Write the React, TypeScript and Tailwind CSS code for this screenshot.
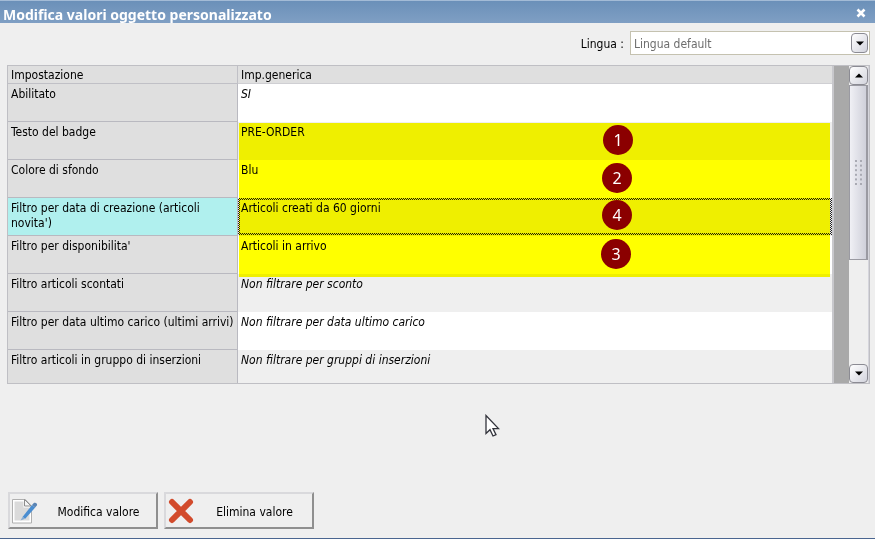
import { useState } from 'react';

interface Setting {
    label: string;
    value: string;
    isDefault?: boolean;
}

const settings: Setting[] = [
    { label: 'Abilitato', value: 'SI', isDefault: true },
    { label: 'Testo del badge', value: 'PRE-ORDER' },
    { label: 'Colore di sfondo', value: 'Blu' },
    { label: "Filtro per data di creazione (articoli novita')", value: 'Articoli creati da 60 giorni' },
    { label: "Filtro per disponibilita'", value: 'Articoli in arrivo' },
    { label: 'Filtro articoli scontati', value: 'Non filtrare per sconto', isDefault: true },
    { label: 'Filtro per data ultimo carico (ultimi arrivi)', value: 'Non filtrare per data ultimo carico', isDefault: true },
    { label: 'Filtro articoli in gruppo di inserzioni', value: 'Non filtrare per gruppi di inserzioni', isDefault: true },
];

// Step markers pinned over the highlighted rows
const markers = [
    { step: 1, position: 'left-[595px] top-[59px]' },
    { step: 2, position: 'left-[594px] top-[97px]' },
    { step: 4, position: 'left-[594px] top-[134px]' },
    { step: 3, position: 'left-[593px] top-[173px]' },
];

const knob = 'flex items-center justify-center rounded-sm border border-[#8b8b93] bg-linear-to-br from-white to-[#d3d4dd]';

const actionButton = 'flex h-[37px] w-[150px] items-center border-2 border-b-[#8f8f8f] border-l-[#d9d9dc] border-r-[#8f8f8f] border-t-[#d9d9dc] pl-px';

function Arrow({ up = false }: { up?: boolean }) {
    return (
        <svg width="8" height="5" viewBox="0 0 8 5" aria-hidden="true">
            <path d={up ? 'M0 4.5 4 .5 8 4.5Z' : 'M0 .5 4 4.5 8 .5Z'} fill="#000" />
        </svg>
    );
}

function EditIcon() {
    return (
        <svg width="28" height="28" viewBox="0 0 28 28" fill="none" aria-hidden="true">
            <path d="M1.5 2.500h13l6 6.500v17h-19Z" fill="#fff" stroke="#b0b0b0" />
            <path d="M3.500 4.500h9v6h6v13h-15Z" fill="#dadada" />
            <path d="M13.500 2.500v6.500h6.500Z" fill="#f5f5f5" stroke="#8d8d8d" />
            <path d="m11.500 20 9.500-12 3.200 2.500-10 11.200Z" fill="#4a8dd0" />
            <path d="m21 8 1.800-2c1.200-1 4.200.6 3 2.600L24.200 10.500Z" fill="#5a84b4" />
            <path d="m11.500 20 2.700 1.700-4.700 1.800Z" fill="#86abd2" />
        </svg>
    );
}

function DeleteIcon() {
    return (
        <svg width="28" height="28" viewBox="0 0 28 28" fill="none" aria-hidden="true">
            <path d="m5 5 18 18M23 5 5 23" stroke="#d24b2c" strokeWidth="6" strokeLinecap="round" />
        </svg>
    );
}

function Cursor() {
    return (
        <svg className="absolute left-[485px] top-[414px]" width="15" height="24" viewBox="0 0 15 24" aria-hidden="true">
            <path d="M1 1.500v18l4-3.800 3 6.300 3-1.400-3-6h5.500Z" fill="#fff" stroke="#33343c" strokeWidth="1.300" />
        </svg>
    );
}

function ValueCell({ setting, selected }: { setting: Setting; selected: boolean }) {
    if (selected) {
        return (
            <div className="h-[37px] bg-[repeating-conic-gradient(#222_0_25%,#efefef_0_50%)] bg-[length:2px_2px] p-[2px]">
                <div className="h-full bg-[#efefef] px-px pt-px">{setting.value}</div>
            </div>
        );
    }
    return <div className={`px-[3px] pt-[3px] ${setting.isDefault ? 'italic' : ''}`}>{setting.value}</div>;
}

export default function App() {
    const [selected, setSelected] = useState(3);

    return (
        <div className="relative flex min-h-screen flex-col border-b border-[#4a6590] bg-[#efefef] font-['DejaVu_Sans_Condensed','DejaVu_Sans',sans-serif] text-xs leading-[15px] text-black [font-stretch:condensed]">
            <header className="flex h-[23px] items-center justify-between border-t border-[#a3bbd6] bg-linear-to-b from-[#6b90b9] to-[#7f9fc4] pl-[3px] pr-2 pt-[6px]">
                <h1 className="font-['Noto_Sans',sans-serif] text-sm font-bold text-white">Modifica valori oggetto personalizzato</h1>
                <button aria-label="Chiudi" className="mb-1 flex size-3 items-center justify-center">
                    <svg width="10" height="10" viewBox="0 0 10 10" aria-hidden="true">
                        <path d="m1.500 1.500 7 7M8.500 1.500l-7 7" stroke="#fff" strokeWidth="2.600" />
                    </svg>
                </button>
            </header>

            <main className="flex grow flex-col pl-[7px] pr-[5px]">
                <div className="flex items-center justify-end gap-[6px] pb-[10px] pt-2">
                    <label htmlFor="lingua" className="pt-[2px]">Lingua :</label>
                    <div className="relative w-60">
                        <select id="lingua" className="h-6 w-full appearance-none border border-[#c5c2b0] bg-white px-[3px] pt-[2px] text-[#6d6d6d]">
                            <option>Lingua default</option>
                        </select>
                        <span className={`${knob} pointer-events-none absolute right-[2px] top-[2px] h-5 w-[17px]`}>
                            <Arrow />
                        </span>
                    </div>
                </div>

                <div className="flex h-[319px] border border-[#bfbfc4]">
                    <div className="relative min-w-0 grow overflow-hidden border-r-2 border-[#c8c8cc]">
                        <table className="w-full table-fixed border-separate border-spacing-0 text-left">
                            <thead>
                                <tr className="h-[18px] bg-[#dfdfdf]">
                                    <th className="w-[230px] border-b border-r border-[#c0c0c6] px-[3px] pt-[2px] font-normal">Impostazione</th>
                                    <th className="border-b border-[#cfcfd3] px-[3px] pt-[2px] font-normal">Imp.generica</th>
                                </tr>
                            </thead>
                            <tbody>
                                {settings.map((setting, i) => (
                                    <tr key={setting.label} onClick={() => setSelected(i)} className="h-[38px] align-top">
                                        <th
                                            scope="row"
                                            className={`border-b border-r border-[#b9b9c0] px-[3px] pt-[3px] font-normal ${i === selected ? 'bg-[#b0f0ee]' : 'bg-[#dfdfdf]'}`}
                                        >
                                            {setting.label}
                                        </th>
                                        <td className={i % 2 ? 'bg-[#efefef]' : 'bg-white'}>
                                            <ValueCell setting={setting} selected={i === selected} />
                                        </td>
                                    </tr>
                                ))}
                            </tbody>
                        </table>
                        <div className="pointer-events-none absolute left-[231px] right-[2px] top-[57px] h-[154px] bg-[#ffff00] mix-blend-multiply" />
                        {markers.map(marker => (
                            <span
                                key={marker.step}
                                className={`absolute flex size-[30px] items-center justify-center rounded-full bg-[#8b0000] font-['Noto_Sans',sans-serif] text-base text-white ${marker.position}`}
                            >
                                {marker.step}
                            </span>
                        ))}
                    </div>
                    <div className="w-[15px] shrink-0 bg-[#a9a9a9]" />
                    <div className="flex w-5 shrink-0 flex-col border-r border-[#d5d5dc]">
                        <button aria-label="Scorri su" className={`${knob} h-[19px]`}>
                            <Arrow up />
                        </button>
                        <div className="flex h-[175px] items-center justify-center border border-r-2 border-[#9a9aa2] bg-linear-to-r from-[#f0f0f5] to-[#cfd0da]">
                            <svg width="9" height="26" viewBox="0 0 9 26" aria-hidden="true">
                                {[0, 1, 2, 3, 4, 5].map(n => (
                                    <g key={n} fill="#a9aab3">
                                        <rect x="1" y={n * 4.6} width="2" height="2" />
                                        <rect x="6" y={n * 4.6} width="2" height="2" />
                                    </g>
                                ))}
                            </svg>
                        </div>
                        <button aria-label="Scorri giù" className={`${knob} mt-auto h-[19px]`}>
                            <Arrow />
                        </button>
                    </div>
                </div>

                <footer className="mt-auto flex gap-[6px] pb-[9px] pl-px">
                    <button className={actionButton}>
                        <EditIcon />
                        <span className="grow pl-[2px] pt-1 text-center">Modifica valore</span>
                    </button>
                    <button className={actionButton}>
                        <DeleteIcon />
                        <span className="grow pl-[2px] pt-1 text-center">Elimina valore</span>
                    </button>
                </footer>
            </main>
            <Cursor />
        </div>
    );
}
